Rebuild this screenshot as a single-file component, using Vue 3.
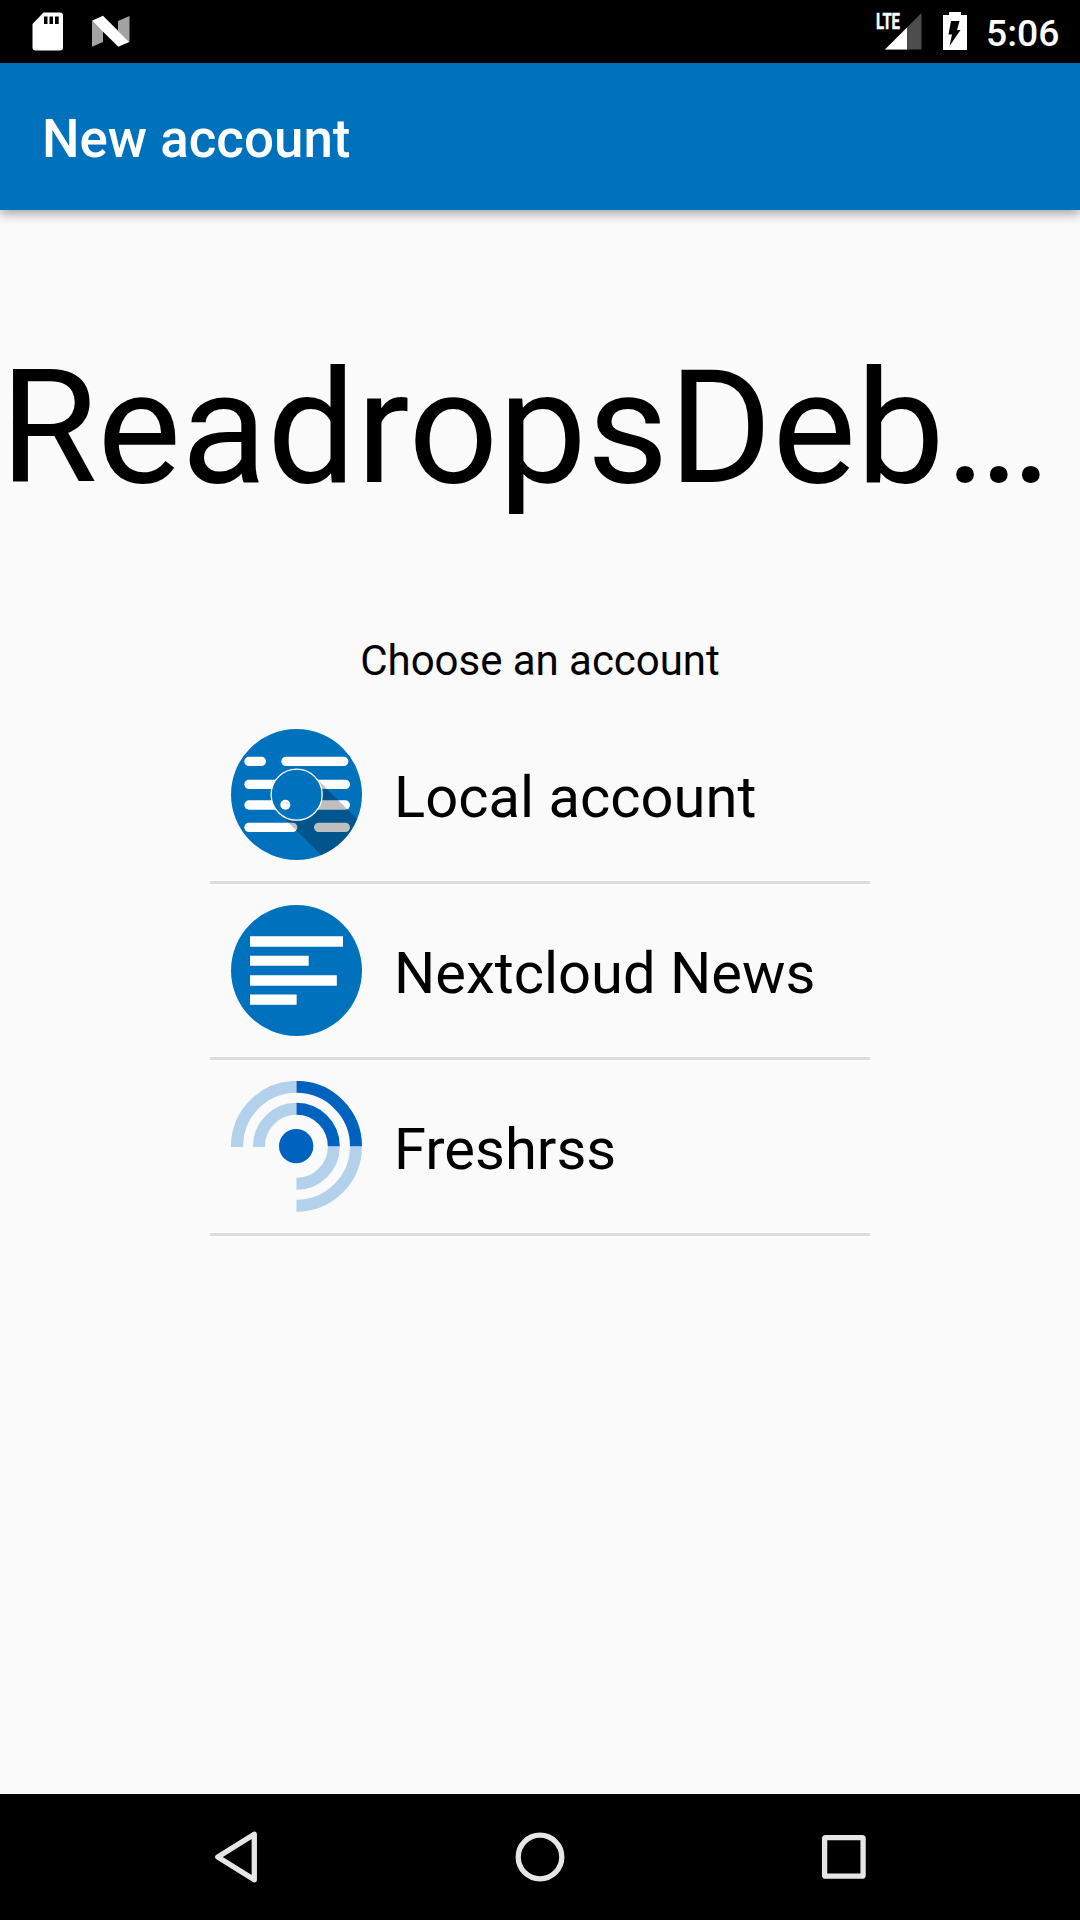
<script setup>
const accounts = [
  { id: 'local', name: 'Local account' },
  { id: 'nextcloud', name: 'Nextcloud News' },
  { id: 'freshrss', name: 'Freshrss' },
]
</script>

<template>
  <div class="screen">
    <header class="status">
      <svg class="notifications" width="140" height="63" viewBox="0 0 140 63">
        <path fill="#fff" d="M43.5 12.5H60a3 3 0 0 1 3 3V47.500a3 3 0 0 1-3 3H35.500a3 3 0 0 1-3-3V24z" />
        <path fill="#000" d="M44 16.500h3.500v7.500H44zM49.500 16.500h3.500v7.500h-3.500zM55 16.500h3.700v7.500H55z" />
        <path fill="#a3a3a3" d="M92 21L103 31V42L92 46.700zM118 21L129.500 16V42L118 31z" />
        <path fill="#fff" d="M92 20.700L103 15.700L129.300 42L118.300 46.800z" />
      </svg>
      <div class="system">
        <svg width="100" height="63" viewBox="870 0 100 63">
          <path fill="#4d4d4d" d="M921.500 13V49.500H885z" />
          <path fill="#fff" d="M907 27.500V49.500H885z" />
          <text class="lte" x="876" y="29" textLength="24" lengthAdjust="spacingAndGlyphs">LTE</text>
          <path fill="#fff" d="M943 15h6v-3h12v3h6v35h-24z" />
          <path fill="#000" d="M951 21h8.500l-2.500 9h3.500L949.500 46l2.500-11.500h-3.500z" />
        </svg>
        <span class="clock">5:06</span>
      </div>
    </header>

    <div class="appbar"><h1 class="title">New account</h1></div>

    <main class="content">
      <div class="app-name">ReadropsDeb…</div>
      <p class="prompt">Choose an account</p>
      <ul class="accounts">
        <li v-for="account in accounts" :key="account.id" class="account">
          <svg v-if="account.id === 'local'" class="logo" viewBox="93 56 393 393">
            <defs>
              <clipPath id="disc"><circle cx="289.500" cy="252.500" r="196.500" /></clipPath>
            </defs>
            <circle cx="289.500" cy="252.500" r="196.500" fill="#0072bd" />
            <g fill="#fff">
              <rect x="133" y="139" width="65" height="28" rx="14" />
              <rect x="244" y="139" width="201" height="28" rx="14" />
              <rect x="133" y="208" width="317" height="28" rx="14" />
              <rect x="133" y="270" width="317" height="28" rx="14" />
              <rect x="133" y="337" width="159" height="28" rx="14" />
              <rect x="342" y="337" width="108" height="28" rx="14" />
            </g>
            <path clip-path="url(#disc)" fill="#000" fill-opacity=".25" d="M344 199L544 399V615L236 307z" />
            <circle cx="290" cy="253" r="76.500" fill="#0072bd" stroke="#fff" stroke-width="4" />
            <circle cx="256" cy="283" r="15" fill="#fff" />
            <path fill="#dedede" d="M255 275l7 0 3 5-3 3z" />
          </svg>
          <svg v-else-if="account.id === 'nextcloud'" class="logo" viewBox="93 75 393 393">
            <circle cx="289.500" cy="271.500" r="196.500" fill="#0072bd" />
            <path fill="#fff" d="M150 169h279v31H150zM150 227h176v30.500H150zM150 286h260.500v31H150zM150 343.500h140v31H150z" />
          </svg>
          <svg v-else class="logo" viewBox="93 63 393 393">
            <g fill="none" stroke-width="36">
              <path stroke="#b3d1eb" d="M111 261V258.500A178.500 178.500 0 0 1 289.500 80.500M177 261V258.500A112.500 112.500 0 0 1 289.500 146.500" />
              <path stroke="#b3d1eb" d="M468 258.500A178.500 178.500 0 0 1 289.500 437M401.500 258.500A112.500 112.500 0 0 1 289.500 371.500" />
              <path stroke="#0062bf" d="M289.500 80.500A178.500 178.500 0 0 1 468 258.500M289.500 146.500A112.500 112.500 0 0 1 401.500 258.500" />
            </g>
            <circle cx="288.500" cy="258.500" r="51.500" fill="#0062bf" />
          </svg>
          <span class="name">{{ account.name }}</span>
        </li>
      </ul>
    </main>

    <nav class="navbar">
      <svg width="60" height="60" viewBox="0 0 60 60">
        <path d="M48.300 7.200V52.800L11.800 30z" />
      </svg>
      <svg width="60" height="60" viewBox="0 0 60 60">
        <circle cx="30" cy="30" r="21.800" />
      </svg>
      <svg width="60" height="60" viewBox="0 0 60 60">
        <rect x="10.600" y="10.700" width="38.500" height="38.500" rx="1" />
      </svg>
    </nav>
  </div>
</template>

<style>
body {
  margin: 0;
}
</style>

<style scoped>
.screen {
  display: flex;
  flex-direction: column;
  width: 1080px;
  height: 1920px;
  overflow: hidden;
  background: #fafafa;
  color: #000;
  font-family: Roboto, sans-serif;
}
.status {
  display: flex;
  justify-content: space-between;
  flex: none;
  height: 63px;
  background: #000;
}
.system {
  display: flex;
  width: 210px;
}
.system svg {
  flex: none;
}
.lte {
  fill: #fff;
  stroke: #fff;
  stroke-width: 0.500px;
  opacity: 0.99;
  font: 700 22px Roboto, sans-serif;
}
.clock {
  margin-left: 16px;
  color: #fff;
  font-size: 37.300px;
  font-weight: 500;
  line-height: 67px;
}
.appbar {
  z-index: 1;
  flex: none;
  box-sizing: border-box;
  height: 147px;
  padding: 5px 0 0 42px;
  background: #0072bd;
  box-shadow: 0 4px 10px rgba(0, 0, 0, 0.34);
}
.title {
  margin: 0;
  color: #fff;
  font-size: 52.900px;
  font-weight: 500;
  line-height: 142px;
}
.content {
  display: flex;
  flex: 1;
  flex-direction: column;
  align-items: center;
}
.app-name {
  width: 1080px;
  margin-top: 126px;
  font-size: 158px;
  line-height: 184px;
  white-space: nowrap;
}
.prompt {
  margin: 116px 0 0;
  font-size: 42px;
  letter-spacing: -0.040px;
  line-height: 50px;
}
.accounts {
  width: 660px;
  margin: 22px 0 0;
  padding: 0;
  list-style: none;
}
.account {
  display: flex;
  align-items: center;
  box-sizing: border-box;
  height: 176px;
  padding-left: 21px;
  border-bottom: 3px solid #dcdcdc;
}
.logo {
  width: 131px;
  height: 131px;
}
.name {
  margin-left: 32px;
  padding-top: 5px;
  font-size: 57.900px;
  line-height: 68px;
}
.navbar {
  display: flex;
  align-items: center;
  justify-content: center;
  gap: 244px;
  flex: none;
  height: 126px;
  background: #000;
}
.navbar svg {
  fill: none;
  stroke: #e6e6e6;
  stroke-width: 5.300px;
  stroke-linejoin: round;
}
</style>
